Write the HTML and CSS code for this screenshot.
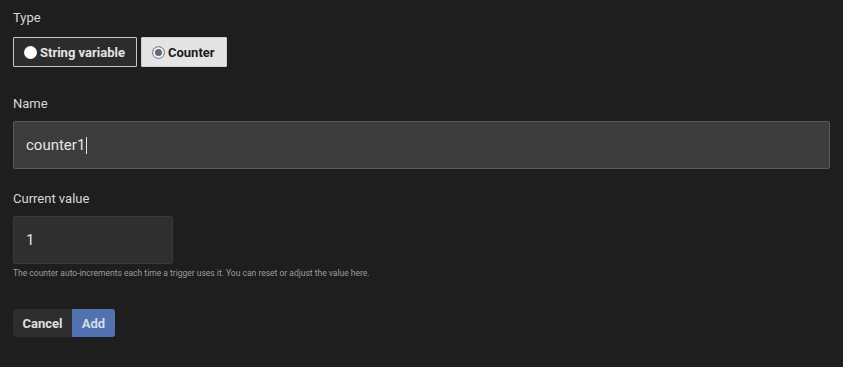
FILE: index.html
```html
<!DOCTYPE html>
<html>
<head>
<meta charset="utf-8">
<link rel="stylesheet" href="styles.css">
</head>
<body>
<div class="form">
  <div class="label label-type">Type</div>
  <div class="radio-group">
    <div class="radio-btn radio-off"><span class="dot dot-off"></span>String variable</div>
    <div class="radio-btn radio-on"><span class="dot dot-on"></span>Counter</div>
  </div>

  <div class="label label-name">Name</div>
  <div class="input input-name"><span class="val">counter1</span><span class="caret"></span></div>

  <div class="label label-value">Current value</div>
  <div class="input input-value"><span class="val">1</span></div>
  <div class="help">The counter auto-increments each time a trigger uses it. You can reset or adjust the value here.</div>

  <div class="actions">
    <div class="btn btn-cancel">Cancel</div>
    <div class="btn btn-add">Add</div>
  </div>
</div>
</body>
</html>
```

FILE: styles.css
```css
html, body {
  margin: 0;
  padding: 0;
  background: #1e1e1e;
}
body {
  font-family: Roboto, "Liberation Sans", sans-serif;
  color: #dcdcdc;
}
.form {
  padding: 10px 13px 0 13px;
  display: flex;
  flex-direction: column;
  align-items: flex-start;
}
.label {
  font-size: 13px;
  line-height: 16px;
  color: #d8d8d8;
}
.radio-group {
  margin-top: 11px;
  display: flex;
  gap: 4px;
}
.radio-btn {
  box-sizing: border-box;
  height: 30px;
  display: flex;
  align-items: center;
  font-size: 13px;
  font-weight: 700;
  border: 1px solid #c8c8c8;
  border-radius: 1px;
}
.radio-off {
  width: 124px;
  padding-left: 10px;
  background: #2c2c2c;
  color: #e4e4e4;
}
.radio-on {
  width: 86px;
  padding-left: 10px;
  background: #e4e4e4;
  color: #1a1a1a;
  border-color: #cfcfcf;
}
.dot {
  box-sizing: border-box;
  width: 13px;
  height: 13px;
  border-radius: 50%;
  margin-right: 3px;
  flex: none;
}
.dot-off {
  background: #ffffff;
}
.dot-on {
  background: #5f6b77;
  border: 1px solid #8a8a8a;
  box-shadow: inset 0 0 0 2px #f2f2f2;
}
.label-name {
  margin-top: 29px;
}
.input {
  box-sizing: border-box;
  height: 48px;
  margin-top: 9px;
  display: flex;
  align-items: center;
  padding-left: 12px;
  font-size: 15px;
  color: #e6e6e6;
  border-radius: 2px;
}
.input-name {
  width: 100%;
  background: #3c3c3c;
  border: 1px solid #5a5a5a;
}
.caret {
  width: 1px;
  height: 17px;
  background: #e6e6e6;
  margin-left: 1px;
}
.label-value {
  margin-top: 22px;
}
.input-value {
  width: 160px;
  background: #2f2f2f;
  border: 1px solid #3a3a3a;
}
.help {
  margin-top: 4px;
  font-size: 8.5px;
  line-height: 10px;
  color: #9c9c9c;
}
.actions {
  margin-top: 31px;
  display: flex;
}
.btn {
  height: 28px;
  display: flex;
  align-items: center;
  justify-content: center;
  font-size: 13px;
  font-weight: 700;
}
.btn-cancel {
  width: 59px;
  background: #2d2d2d;
  color: #e0e0e0;
  border-radius: 3px 0 0 3px;
}
.btn-add {
  width: 43px;
  background: #5171b0;
  color: #d6dbe6;
  border-radius: 0 3px 3px 0;
}
```
